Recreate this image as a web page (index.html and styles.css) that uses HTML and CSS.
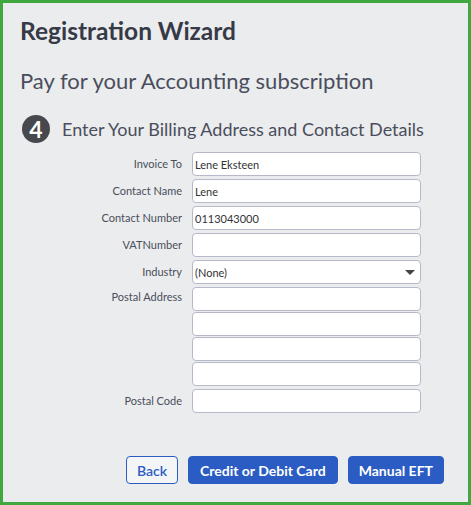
FILE: index.html
```
<!DOCTYPE html>
<html>
<head>
    <meta charset="UTF-8">
    <title>Registration Wizard</title>
    <link rel="stylesheet" href="styles.css">
</head>
<body>
    <div class="wizard">
        <h1>Registration Wizard</h1>
        <h2>Pay for your Accounting subscription</h2>

        <!-- Step heading -->
        <div class="step">
            <span class="step-num">4</span>
            <span class="step-title">Enter Your Billing Address and Contact Details</span>
        </div>

        <form class="billing">
            <label>Invoice To</label>
            <input type="text" value="Lene Eksteen" />

            <label>Contact Name</label>
            <input type="text" value="Lene" />

            <label>Contact Number</label>
            <input type="text" value="0113043000" />

            <label>VATNumber</label>
            <input type="text" value="" />

            <label>Industry</label>
            <div class="select-wrap">
                <select>
                    <option>(None)</option>
                </select>
            </div>

            <label class="label-top">Postal Address</label>
            <div class="address-lines">
                <input type="text" />
                <input type="text" />
                <input type="text" />
                <input type="text" />
            </div>

            <label>Postal Code</label>
            <input type="text" />
        </form>

        <!-- Actions -->
        <div class="actions">
            <button class="btn btn-outline">Back</button>
            <button class="btn btn-card">Credit or Debit Card</button>
            <button class="btn">Manual EFT</button>
        </div>
    </div>
</body>
</html>
```

FILE: styles.css
```
html, body {
    margin: 0;
    padding: 0;
}

body {
    font-family: Lato, "Open Sans", sans-serif;
    background: #ebecee;
}

/* Green frame round the whole wizard */
.wizard {
    box-sizing: border-box;
    width: 471px;
    height: 505px;
    border: 3px solid #40a83f;
    padding: 13px 24px 0 17px;
    display: flex;
    flex-direction: column;
}

h1 {
    margin: 0;
    font-size: 24.5px;
    line-height: 30px;
    font-weight: 700;
    color: #363a47;
}

h2 {
    margin: 22px 0 0 0;
    font-size: 22px;
    line-height: 26px;
    font-weight: 400;
    color: #4a4e5c;
}

/* Step number + title */
.step {
    display: flex;
    align-items: center;
    margin-top: 21px;
    padding-left: 2px;
}

.step-num {
    width: 28px;
    height: 28px;
    border-radius: 50%;
    background: #47484d;
    color: #fff;
    font-weight: 700;
    font-size: 23px;
    line-height: 28px;
    text-align: center;
    margin-right: 12px;
}

.step-title {
    font-size: 18px;
    color: #4a4e5c;
}

/* Form grid: labels on the left, fields on the right */
.billing {
    display: grid;
    grid-template-columns: 162px 229px;
    column-gap: 10px;
    row-gap: 3px;
    margin-top: 9px;
}

.billing label {
    text-align: right;
    font-size: 11px;
    line-height: 16px;
    padding-top: 4px;
    color: #4a4e5a;
}

    .billing label.label-top {
        padding-top: 2px;
    }

input, select {
    box-sizing: border-box;
    width: 229px;
    height: 24px;
    margin: 0;
    padding: 0 2px;
    border: 1px solid #b7b9ca;
    border-radius: 4px;
    background: #fff;
    font-family: Lato, "Open Sans", sans-serif;
    font-size: 11px;
    color: #333;
}

.select-wrap {
    position: relative;
}

    .select-wrap select {
        appearance: none;
        -webkit-appearance: none;
    }

    .select-wrap::after {
        content: "";
        position: absolute;
        right: 6px;
        top: 10px;
        border-left: 5px solid transparent;
        border-right: 5px solid transparent;
        border-top: 5px solid #444;
        pointer-events: none;
    }

.address-lines {
    display: flex;
    flex-direction: column;
    gap: 1px;
}

/* Bottom button row */
.actions {
    display: flex;
    justify-content: flex-end;
    gap: 10px;
    margin-top: auto;
    margin-bottom: 18px;
}

.btn {
    height: 28px;
    padding: 0 10px;
    border: 1px solid #2b5cc4;
    border-radius: 4px;
    background: #2b5cc4;
    color: #fff;
    font-family: Lato, "Open Sans", sans-serif;
    font-weight: 700;
    font-size: 14px;
    cursor: pointer;
}

    .btn:hover {
        background: #224ca6;
    }

.btn-card {
    padding: 0 11px;
}

.btn-outline {
    background: #f4f5f7;
    color: #2b5cc4;
    font-weight: 600;
}

    .btn-outline:hover {
        background: #fff;
    }
```
